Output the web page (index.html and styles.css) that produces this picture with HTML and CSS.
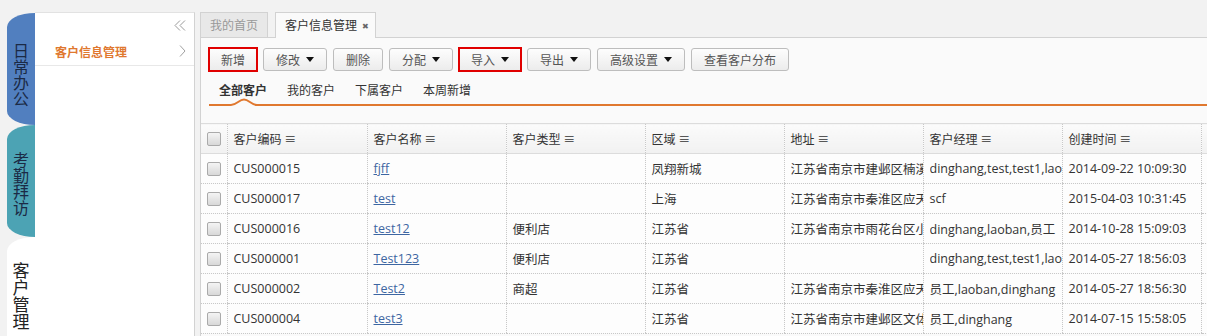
FILE: index.html
```html
<!DOCTYPE html>
<html lang="zh-CN">
<head>
  <meta charset="UTF-8">
  <title>客户信息管理</title>
  <link rel="stylesheet" href="styles.css">
</head>
<body>
  <div class="app">
    <nav class="side-tabs">
      <div class="side-tab side-tab--blue"><span>日常办公</span></div>
      <div class="side-tab side-tab--teal"><span>考勤拜访</span></div>
      <div class="side-tab side-tab--active"><span>客户管理</span></div>
    </nav>

    <aside class="sidebar">
      <div class="sidebar__top">
        <svg class="sidebar__collapse" width="12" height="11" viewBox="0 0 12 11">
          <path d="M6 0.5 L1 5.5 L6 10.5 M11 0.5 L6 5.5 L11 10.5" fill="none" stroke="#9a9a9a" stroke-width="1"/>
        </svg>
      </div>
      <a class="menu-item">
        <span>客户信息管理</span>
        <svg width="7" height="12" viewBox="0 0 7 12">
          <path d="M1 0.5 L6 6 L1 11.5" fill="none" stroke="#a0a0a0" stroke-width="1"/>
        </svg>
      </a>
    </aside>

    <main class="main">
      <div class="tabbar">
        <div class="page-tab">我的首页</div>
        <div class="page-tab page-tab--active">客户信息管理<span class="page-tab__close">✖</span></div>
      </div>

      <section class="panel">
        <div class="toolbar">
          <button class="btn btn--mark">新增</button>
          <button class="btn">修改 <i class="caret"></i></button>
          <button class="btn">删除</button>
          <button class="btn">分配 <i class="caret"></i></button>
          <button class="btn btn--mark">导入 <i class="caret"></i></button>
          <button class="btn">导出 <i class="caret"></i></button>
          <button class="btn">高级设置 <i class="caret"></i></button>
          <button class="btn">查看客户分布</button>
        </div>

        <div class="subtabs">
          <span class="subtab subtab--active">全部客户
            <svg class="subtab__notch" width="26" height="9" viewBox="0 0 26 9">
              <path d="M0 7 C6 7 8 1.5 13 1.5 C18 1.5 20 7 26 7 L26 9 L0 9 Z" fill="#fafafa"/>
              <path d="M0 7 C6 7 8 1.5 13 1.5 C18 1.5 20 7 26 7" fill="none" stroke="#e0782f" stroke-width="2"/>
            </svg>
          </span>
          <span class="subtab">我的客户</span>
          <span class="subtab">下属客户</span>
          <span class="subtab">本周新增</span>
        </div>

        <table class="grid">
          <colgroup>
            <col class="col-check">
            <col class="col-wide">
            <col class="col">
            <col class="col">
            <col class="col">
            <col class="col">
            <col class="col">
            <col class="col">
            <col class="col">
          </colgroup>
          <thead>
            <tr>
              <th><span class="check"></span></th>
              <th>客户编码 ≡</th>
              <th>客户名称 ≡</th>
              <th>客户类型 ≡</th>
              <th>区域 ≡</th>
              <th>地址 ≡</th>
              <th>客户经理 ≡</th>
              <th>创建时间 ≡</th>
              <th></th>
            </tr>
          </thead>
          <tbody>
            <tr>
              <td><span class="check"></span></td>
              <td>CUS000015</td>
              <td><a class="link">fjff</a></td>
              <td></td>
              <td>凤翔新城</td>
              <td><div class="cell">江苏省南京市建邺区楠溪江东街</div></td>
              <td><div class="cell">dinghang,test,test1,laoban</div></td>
              <td>2014-09-22 10:09:30</td>
              <td></td>
            </tr>
            <tr>
              <td><span class="check"></span></td>
              <td>CUS000017</td>
              <td><a class="link">test</a></td>
              <td></td>
              <td>上海</td>
              <td><div class="cell">江苏省南京市秦淮区应天大街</div></td>
              <td>scf</td>
              <td>2015-04-03 10:31:45</td>
              <td></td>
            </tr>
            <tr>
              <td><span class="check"></span></td>
              <td>CUS000016</td>
              <td><a class="link">test12</a></td>
              <td>便利店</td>
              <td>江苏省</td>
              <td><div class="cell">江苏省南京市雨花台区小行路</div></td>
              <td><div class="cell">dinghang,laoban,员工</div></td>
              <td>2014-10-28 15:09:03</td>
              <td></td>
            </tr>
            <tr>
              <td><span class="check"></span></td>
              <td>CUS000001</td>
              <td><a class="link">Test123</a></td>
              <td>便利店</td>
              <td>江苏省</td>
              <td></td>
              <td><div class="cell">dinghang,test,test1,laoban</div></td>
              <td>2014-05-27 18:56:03</td>
              <td></td>
            </tr>
            <tr>
              <td><span class="check"></span></td>
              <td>CUS000002</td>
              <td><a class="link">Test2</a></td>
              <td>商超</td>
              <td>江苏省</td>
              <td><div class="cell">江苏省南京市秦淮区应天大街</div></td>
              <td><div class="cell">员工,laoban,dinghang</div></td>
              <td>2014-05-27 18:56:30</td>
              <td></td>
            </tr>
            <tr>
              <td><span class="check"></span></td>
              <td>CUS000004</td>
              <td><a class="link">test3</a></td>
              <td></td>
              <td>江苏省</td>
              <td><div class="cell">江苏省南京市建邺区文体路</div></td>
              <td>员工,dinghang</td>
              <td>2014-07-15 15:58:05</td>
              <td></td>
            </tr>
          </tbody>
        </table>
      </section>
    </main>
  </div>
</body>
</html>
```

FILE: styles.css
```css
:root {
  --page-bg: #f2f2f2;
  --panel-bg: #fafafa;
  --border: #d2d2d2;
  --grid-line: #c8c8c8;
  --text: #333;
  --muted: #999;
  --orange: #e0782f;
  --link: #3d66a2;
  --mark: #e00000;
  --tab-blue: #517fbf;
  --tab-teal: #4ca3b4;
}

html, body {
  margin: 0;
  height: 100%;
}

body {
  background: var(--page-bg);
  font-family: "Open Sans", "Noto Sans CJK SC", sans-serif;
  font-size: 12px;
  color: var(--text);
  overflow: hidden;
}

.app {
  display: flex;
  height: 100%;
  padding-top: 12px;
  box-sizing: border-box;
}

/* left vertical tabs */
.side-tabs {
  width: 28px;
  margin-left: 7px;
  display: flex;
  flex-direction: column;
  padding-top: 1px;
}

.side-tab {
  height: 112px;
  flex-shrink: 0;
  box-sizing: border-box;
  padding-top: 30px;
  display: flex;
  justify-content: center;
  border-radius: 28px 0 0 28px / 14px 0 0 14px;
  font-family: "Noto Sans CJK SC", sans-serif;
  font-size: 16px;
  color: #1b2a45;
}

.side-tab span {
  writing-mode: vertical-rl;
  line-height: 1;
}

.side-tab--blue {
  background: var(--tab-blue);
}

.side-tab--teal {
  background: var(--tab-teal);
  padding-top: 27px;
}

.side-tab--active {
  background: #fff;
  color: #222;
  font-size: 17px;
  padding-top: 25px;
}

/* sidebar menu */
.sidebar {
  width: 159px;
  background: #fff;
  border-top: 1px solid #e2e2e2;
  border-right: 1px solid var(--border);
}

.sidebar__top {
  height: 24px;
  display: flex;
  justify-content: flex-end;
  align-items: center;
  padding-right: 8px;
}

.menu-item {
  display: flex;
  justify-content: space-between;
  align-items: center;
  height: 28px;
  padding: 0 8px 0 20px;
  border-bottom: 1px solid #e8e8e8;
  color: var(--orange);
  font-weight: bold;
  font-family: "Noto Sans CJK SC", sans-serif;
  font-size: 12px;
}

/* main area */
.main {
  flex: 1;
  margin-left: 5px;
  min-width: 0;
  overflow: hidden;
  display: flex;
  flex-direction: column;
}

.tabbar {
  display: flex;
  align-items: flex-end;
  gap: 7px;
  height: 25px;
}

.page-tab {
  height: 24px;
  line-height: 24px;
  padding: 0 9px;
  background: #e8e8e8;
  border: 1px solid var(--border);
  border-bottom: none;
  color: var(--muted);
  font-family: "Noto Sans CJK SC", sans-serif;
}

.page-tab--active {
  height: 25px;
  margin-bottom: -1px;
  padding-right: 6px;
  background: var(--panel-bg);
  color: #333;
  position: relative;
  z-index: 1;
}

.page-tab__close {
  font-size: 8px;
  color: #666;
  margin-left: 5px;
  vertical-align: 1px;
}

.panel {
  flex: 1;
  background: var(--panel-bg);
  border-top: 1px solid var(--border);
  border-left: 1px solid var(--border);
}

.toolbar {
  display: flex;
  gap: 6px;
  padding: 10px 0 0 8px;
}

.btn {
  height: 23px;
  padding: 0 12px;
  border: 1px solid #bdbdbd;
  border-radius: 3px;
  background: linear-gradient(#fdfdfd, #ececec);
  color: #555;
  font-family: "Noto Sans CJK SC", sans-serif;
  font-size: 12px;
  display: flex;
  align-items: center;
  gap: 6px;
}

.btn--mark {
  outline: 2px solid var(--mark);
  outline-offset: -1px;
  border-radius: 0;
  padding: 0 11px;
}

.caret {
  width: 0;
  height: 0;
  border-left: 4.5px solid transparent;
  border-right: 4.5px solid transparent;
  border-top: 5px solid #111;
}

.subtabs {
  display: flex;
  gap: 20px;
  margin: 0 0 0 8px;
  padding: 9px 0 4px 10px;
  border-bottom: 2px solid var(--orange);
  font-family: "Noto Sans CJK SC", sans-serif;
}

.subtab {
  position: relative;
  line-height: 20px;
  color: #333;
}

.subtab--active {
  font-weight: bold;
}

.subtab__notch {
  position: absolute;
  left: 12px;
  bottom: -7px;
}

/* data grid */
.grid {
  margin-top: 17px;
  border-collapse: collapse;
  table-layout: fixed;
  width: 1120px;
}

.col-check { width: 26px; }
.col-wide { width: 140px; }
.col { width: 139px; }

.grid th,
.grid td {
  height: 29px;
  padding: 0 0 0 6px;
  text-align: left;
  white-space: nowrap;
  overflow: hidden;
  border-left: 1px dotted var(--grid-line);
  border-bottom: 1px dotted var(--grid-line);
}

.grid th:first-child,
.grid td:first-child {
  border-left: none;
}

.grid th {
  font-weight: normal;
  font-family: "Noto Sans CJK SC", sans-serif;
  background: linear-gradient(#fbfbfb, #f1f1f1);
  border-top: 1px solid #dcdcdc;
  border-bottom: 1px solid #dcdcdc;
  color: #333;
}

.grid td {
  background: #fdfdfd;
  font-size: 12.5px;
}

.cell {
  width: 132px;
  overflow: hidden;
  white-space: nowrap;
}

.link {
  color: var(--link);
  text-decoration: underline;
}

.check {
  display: block;
  width: 12px;
  height: 12px;
  border: 1px solid #aaa;
  border-radius: 2px;
  background: linear-gradient(#f4f4f4, #d8d8d8);
}
```
